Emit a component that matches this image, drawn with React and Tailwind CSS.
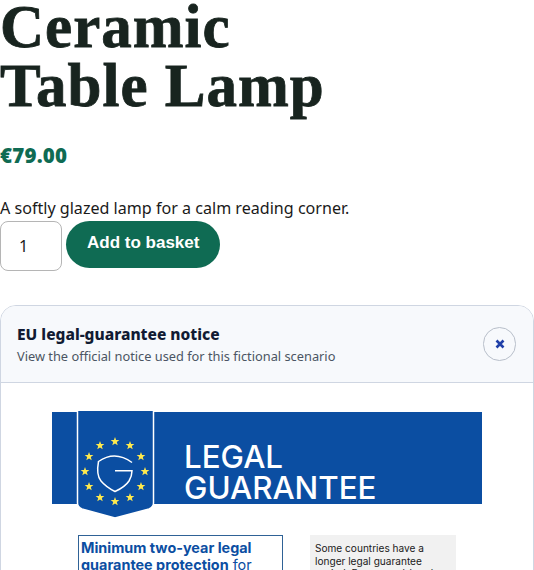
const STARS = Array.from({ length: 12 }, (_, i) => {
  const a = (Math.PI / 6) * i;
  return [115 + 30 * Math.cos(a), 471.5 + 30 * Math.sin(a)];
});

function Star({ x, y }) {
  const pts = [];
  for (let i = 0; i < 10; i++) {
    const r = i % 2 === 0 ? 4.6 : 1.9;
    const a = (Math.PI / 5) * i - Math.PI / 2;
    pts.push(`${x + r * Math.cos(a)},${y + r * Math.sin(a)}`);
  }
  return <polygon points={pts.join(" ")} fill="#ffe94d" />;
}

function Shield() {
  return (
    <svg width="79" height="108" viewBox="76 411 79 108" className="absolute left-[24px] top-[-1px]">
      <path d="M77.5 411V503Q77.5 507 82 509L115 518L149 509Q153.5 507 153.5 503V411" fill="#0b4ea2" stroke="#fff" strokeWidth="1.5" />
      {STARS.map(([x, y], i) => <Star key={i} x={x} y={y} />)}
      <path d="M132 462.5Q115 450 98.5 461.5Q96 475 101 481Q106 487 115 491.5Q125 487 129 481Q132 476 132 470.7H115" fill="none" stroke="#fff" strokeWidth="1.5" />
    </svg>
  );
}

export default function App() {
  return (
    <div className="h-[570px] overflow-hidden bg-white text-[16px] text-[#1a1a1a] font-['Noto_Sans',sans-serif]">
      <h1 className="-mt-[3px] font-['Liberation_Serif',serif] font-bold text-[61px] leading-[59px] tracking-[1px] [-webkit-text-stroke:0.8px_#18241f] text-[#18241f]">
        Ceramic<br />Table Lamp
      </h1>
      <div className="mt-[27px] font-black text-[20.5px] leading-[26px] tracking-[0.2px] text-[#0f6b53]">€79.00</div>
      <p className="mt-[29px] text-[16.1px] leading-[22px]">A softly glazed lamp for a calm reading corner.</p>
      <div className="mt-[2px] flex items-start gap-[4px]">
        <div className="w-[62px] h-[50px] border border-[#b5b5b5] rounded-[8px] flex items-center pl-[18px] text-[16px] bg-white">1</div>
        <button className="h-[47px] px-[21px] rounded-full bg-[#0f6b53] text-white font-['Liberation_Sans',sans-serif] font-bold text-[17px] pb-[4px]">Add to basket</button>
      </div>
      <section className="mt-[34px] border border-[#cfd6e2] rounded-[16px] overflow-hidden">
        <header className="h-[77px] bg-[#f7f9fc] border-b border-[#cfd6e2] flex items-center justify-between pl-[16px] pr-[17px]">
          <div>
            <h2 className="font-extrabold text-[15.5px] leading-[20px] text-[#111b33]">EU legal-guarantee notice</h2>
            <p className="mt-[3px] text-[12.8px] leading-[18px] text-[#4b5563]">View the official notice used for this fictional scenario</p>
          </div>
          <button className="w-[33px] h-[34px] rounded-full border border-[#b7bec9] flex items-center justify-center">
            <svg width="10" height="10" viewBox="0 0 10 10"><path d="M1.5 1.5L8.5 8.5M8.5 1.5L1.5 8.5" stroke="#1f3fa8" strokeWidth="2.6" /></svg>
          </button>
        </header>
        <div className="pt-[29px] px-[51px] bg-white">
          <div className="relative w-[430px] h-[92px] bg-[#0b4ea2] font-['Inter',sans-serif]">
            <Shield />
            <div className="pl-[132px] pt-[30px] text-white text-[31.3px] leading-[31px] font-medium">LEGAL<br />GUARANTEE</div>
          </div>
          <div className="mt-[31px] ml-[26px] flex items-start gap-[27px] font-['Inter',sans-serif]">
            <div className="w-[205px] h-[100px] border border-[#2f6296] px-[2px] pt-[3px] text-[14.4px] leading-[17px] text-[#0b4ea2]">
              <b className="font-bold">Minimum two-year legal guarantee protection</b> for
            </div>
            <div className="w-[146px] h-[100px] bg-[#f1f1f1] pl-[5px] pr-[4px] pt-[7px] text-[10.1px] leading-[12.5px] text-[#1a1a1a]">
              Some countries have a longer legal guarantee period. For second-hand
            </div>
          </div>
        </div>
      </section>
    </div>
  );
}
